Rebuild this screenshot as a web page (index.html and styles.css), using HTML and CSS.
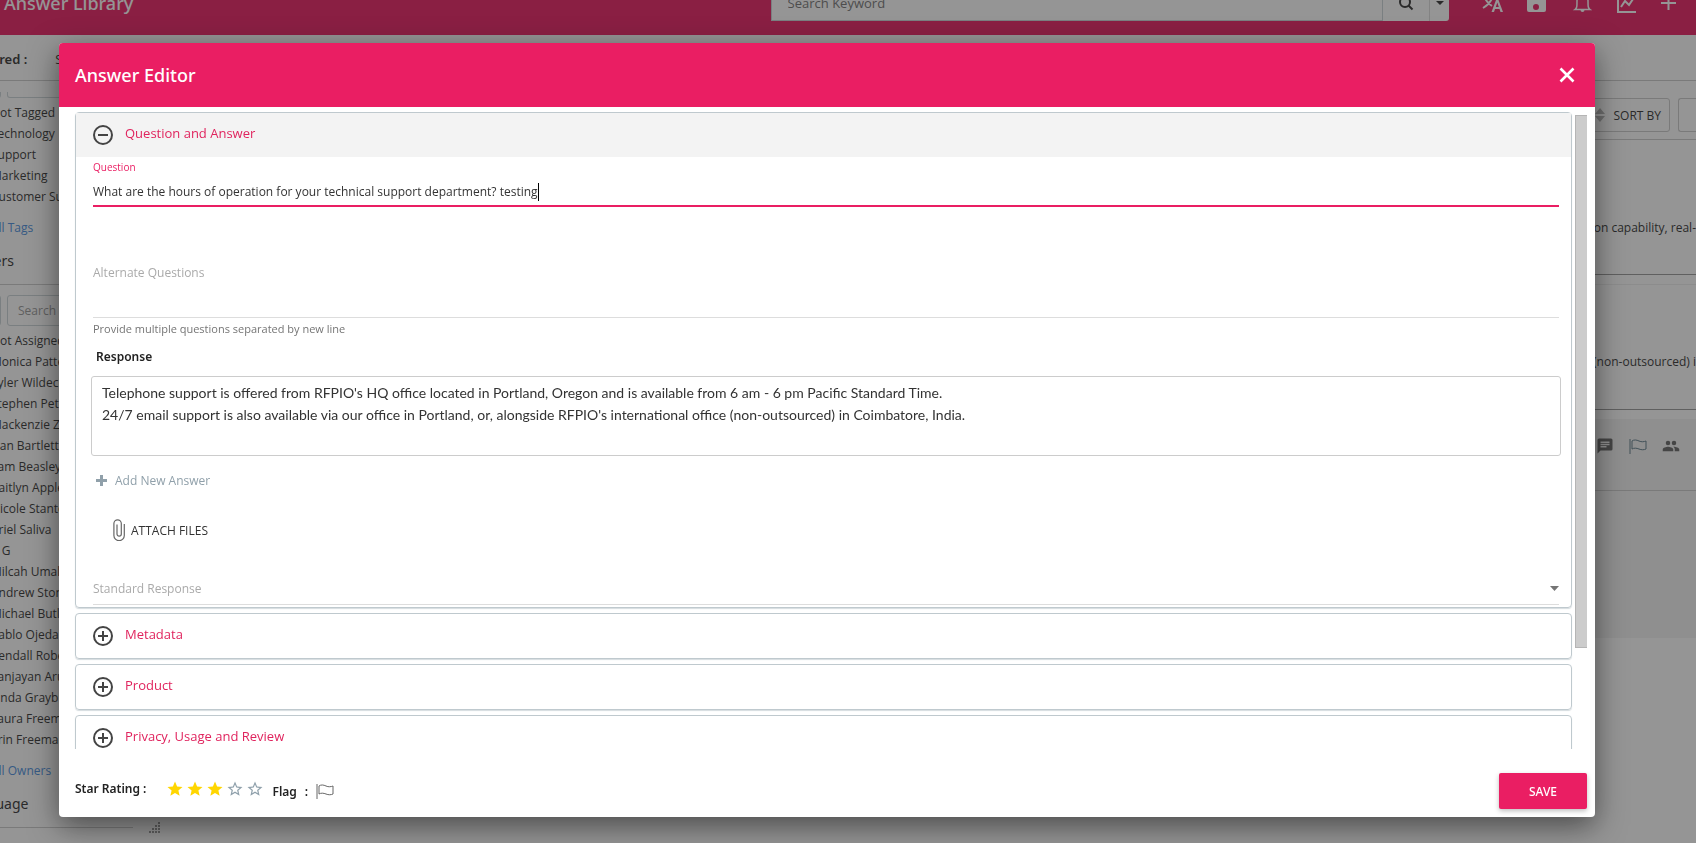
FILE: index.html
```
<!DOCTYPE html>
<html lang="en">
<head>
  <meta charset="UTF-8">
  <meta name="viewport" content="width=device-width, initial-scale=1.0">
  <title>Answer Library</title>
  <link rel="stylesheet" href="styles.css">
</head>
<body>
  <!-- Shared icons -->
  <svg class="icon-defs" aria-hidden="true">
    <symbol id="icon-plus-circle" viewBox="0 0 20 20">
      <circle cx="10" cy="10" r="9" fill="none" stroke="currentColor" stroke-width="2"/>
      <path d="M5 10h10M10 5v10" stroke="currentColor" stroke-width="2"/>
    </symbol>
    <symbol id="icon-minus-circle" viewBox="0 0 20 20">
      <circle cx="10" cy="10" r="9" fill="none" stroke="currentColor" stroke-width="2"/>
      <path d="M5 10h10" stroke="currentColor" stroke-width="2"/>
    </symbol>
    <symbol id="icon-star" viewBox="0 0 24 24">
      <path d="M12 17.27L18.18 21l-1.64-7.03L22 9.24l-7.19-.61L12 2 9.19 8.63 2 9.24l5.46 4.73L5.82 21z" fill="currentColor"/>
    </symbol>
    <symbol id="icon-star-empty" viewBox="0 0 24 24">
      <path d="M22 9.24l-7.19-.62L12 2 9.19 8.63 2 9.24l5.46 4.73L5.82 21 12 17.27 18.18 21l-1.63-7.03L22 9.24zM12 15.4l-3.76 2.27 1-4.28-3.32-2.88 4.38-.38L12 6.1l1.71 4.04 4.38.38-3.32 2.88 1 4.28L12 15.4z" fill="currentColor"/>
    </symbol>
    <symbol id="icon-flag" viewBox="0 0 18 16">
      <path d="M1 1v15M3 3c2-1.500 4.500-1.200 7 0s5 .8 7 0v8c-2 1-4.500 1-7 0s-5-1.200-7 0z" fill="none" stroke="currentColor" stroke-width="1"/>
    </symbol>
  </svg>

  <!-- Page behind the dialog -->
  <div class="page">
    <header class="topbar">
      <h1 class="topbar-title">Answer Library</h1>
      <form class="search">
        <input type="text" class="search-input" placeholder="Search Keyword" aria-label="Search Keyword">
        <button type="button" class="search-button" aria-label="Search">
          <svg width="16" height="16" viewBox="0 0 16 16"><circle cx="7" cy="7" r="5" fill="none" stroke="currentColor" stroke-width="2"/><path d="M10.500 10.500l4 4" stroke="currentColor" stroke-width="2"/></svg>
        </button>
        <button type="button" class="search-caret" aria-label="Search options">
          <svg width="8" height="4" viewBox="0 0 8 4"><path d="M0 0h8L4 4z" fill="currentColor"/></svg>
        </button>
      </form>
      <nav class="topbar-icons">
        <button type="button" aria-label="Translate">
          <svg viewBox="0 0 24 24"><path d="M2 4h14M9 1v3M13 4c-1 5-5 10-10 13M5 7c1.500 4 4 6 7 8" fill="none" stroke="currentColor" stroke-width="2"/><path d="M18.500 9h-2.500L11.500 21h2.500l1-3h4.500l1 3H23zm-2.700 7l1.500-4.500L18.800 16z" fill="currentColor"/></svg>
        </button>
        <button type="button" aria-label="Saved">
          <svg viewBox="0 0 24 24"><path d="M18 3H5a2 2 0 0 0-2 2v14a2 2 0 0 0 2 2h15a2 2 0 0 0 2-2V7zm-6 16a3 3 0 1 1 0-6 3 3 0 0 1 0 6zM15 9H5V5h10z" fill="currentColor"/></svg>
        </button>
        <button type="button" aria-label="Notifications">
          <svg viewBox="0 0 24 24"><path d="M7 18.500c2-1.500 2-3 2-8.500 0-3 2-6 5.500-6S20 7 20 10c0 5.500 0 7 2 8.500z" fill="none" stroke="currentColor" stroke-width="1.500"/><path d="M12.500 19h4a2 2 0 0 1-4 0z" fill="currentColor"/></svg>
        </button>
        <button type="button" aria-label="Reports">
          <svg viewBox="0 0 24 24"><path d="M6 2v19h18M9 16l4-6 4 4 6-9" fill="none" stroke="currentColor" stroke-width="2"/></svg>
        </button>
        <button type="button" aria-label="Add">
          <svg viewBox="0 0 24 24"><path d="M5 12h15M12.500 5v14" stroke="currentColor" stroke-width="2"/></svg>
        </button>
      </nav>
    </header>

    <div class="filter-bar">
      <b>Filtered :</b>
      <span>Search</span>
    </div>

    <div class="columns">
      <aside class="sidebar">
        <div class="filter-box filter-box-cut">
          <span class="filter-check"></span>
          <input type="text" class="filter-input" aria-label="Search Tags">
        </div>
        <ul class="filter-list">
          <li>Not Tagged</li>
          <li>Technology</li>
          <li>Support</li>
          <li>Marketing</li>
          <li>Customer Success</li>
        </ul>
        <a class="filter-all" href="#">All Tags</a>
        <h2 class="filter-heading">Owners</h2>
        <div class="filter-box">
          <span class="filter-check"></span>
          <input type="text" class="filter-input" placeholder="Search Owners" aria-label="Search Owners">
        </div>
        <ul class="filter-list">
          <li>Not Assigned</li>
          <li>Monica Patterson</li>
          <li>Tyler Wildeck</li>
          <li>Stephen Peters</li>
          <li>Mackenzie Zane</li>
          <li>Dan Bartlett</li>
          <li>Sam Beasley</li>
          <li>Caitlyn Appleby</li>
          <li>Nicole Stanton</li>
          <li>Ariel Saliva</li>
          <li>A G</li>
          <li>Milcah Umali</li>
          <li>Andrew Stone</li>
          <li>Michael Butler</li>
          <li>Pablo Ojeda</li>
          <li>Kendall Roberts</li>
          <li>Sanjayan Arun</li>
          <li>Linda Grayburn</li>
          <li>Laura Freeman</li>
          <li>Erin Freeman</li>
        </ul>
        <a class="filter-all" href="#">All Owners</a>
        <h2 class="filter-heading filter-heading-last">Language</h2>
      </aside>
      <svg class="resize-handle" width="12" height="12" viewBox="0 0 12 12" aria-hidden="true"><path d="M0 9h2v2H0zM3 9h2v2H3zM6 9h2v2H6zM9 9h2v2H9zM3 6h2v2H3zM6 6h2v2H6zM9 6h2v2H9zM6 3h2v2H6zM9 3h2v2H9zM9 0h2v2H9z" fill="currentColor"/></svg>

      <main class="results">
        <div class="toolbar">
          <button type="button" class="tool-button">
            <svg width="10" height="14" viewBox="0 0 10 14"><path d="M0 6l5-6 5 6zM0 8h10l-5 6z" fill="#b5b5b5"/></svg>
            SORT BY
          </button>
          <button type="button" class="tool-button tool-button-cut" aria-label="More"></button>
        </div>
        <article class="result result-first">
          <p>integration capability, real-</p>
        </article>
        <article class="result">
          <p>(non-outsourced) i</p>
        </article>
        <article class="result result-active">
          <div class="result-icons">
            <svg width="18" height="18" viewBox="0 0 24 24"><path d="M20 2H4a2 2 0 0 0-2 2v18l4-4h14a2 2 0 0 0 2-2V4a2 2 0 0 0-2-2zm-6 12H6v-2h8zm4-3H6V9h12zm0-3H6V6h12z" fill="#666"/></svg>
            <svg class="flag" width="18" height="16"><use href="#icon-flag"/></svg>
            <svg width="18" height="18" viewBox="0 0 24 24"><path d="M16 11a3 3 0 1 0 0-6 3 3 0 0 0 0 6zm-8 0a3 3 0 1 0 0-6 3 3 0 0 0 0 6zm0 2c-2.300 0-7 1.200-7 3.500V19h14v-2.500C15 14.200 10.300 13 8 13zm8 0h-1c1.200.8 2 2 2 3.500V19h6v-2.500c0-2.300-4.700-3.500-7-3.500z" fill="#666"/></svg>
          </div>
        </article>
      </main>
    </div>
  </div>

  <!-- Answer Editor -->
  <div class="overlay">
    <div class="dialog" role="dialog" aria-labelledby="dialogTitle">
      <div class="dialog-header">
        <h2 id="dialogTitle">Answer Editor</h2>
        <button type="button" class="close-button" aria-label="Close">
          <svg width="16" height="16" viewBox="0 0 16 16"><path d="M1.500 1.500l13 13M14.500 1.500l-13 13" stroke="currentColor" stroke-width="2.600"/></svg>
        </button>
      </div>

      <div class="dialog-body">
        <div class="panels">
          <section class="panel">
            <button type="button" class="panel-header panel-header-open">
              <svg width="20" height="20"><use href="#icon-minus-circle"/></svg>
              <span>Question and Answer</span>
            </button>
            <div class="panel-content">
              <label class="question-label" for="question">Question</label>
              <div class="question-field">
                <input type="text" id="question" value="What are the hours of operation for your technical support department? testing">
                <span class="text-cursor"></span>
              </div>

              <textarea id="alternate" class="alternate" placeholder="Alternate Questions" aria-label="Alternate Questions" aria-describedby="alternateHint"></textarea>
              <p id="alternateHint" class="hint">Provide multiple questions separated by new line</p>

              <label class="response-label" for="response">Response</label>
              <textarea id="response" class="response">Telephone support is offered from RFPIO's HQ office located in Portland, Oregon and is available from 6 am - 6 pm Pacific Standard Time.
24/7 email support is also available via our office in Portland, or, alongside RFPIO's international office (non-outsourced) in Coimbatore, India.</textarea>

              <button type="button" class="add-answer">
                <svg width="11" height="11" viewBox="0 0 11 11"><path d="M0 5.500h11M5.500 0v11" stroke="currentColor" stroke-width="3"/></svg>
                Add New Answer
              </button>
              <button type="button" class="attach">
                <svg width="12" height="22" viewBox="0 0 12 22"><path d="M11.300 5v11.500a5 5 0 0 1-10.400 0V4.500a3.700 3.700 0 0 1 7.400 0V15a2 2 0 0 1-4.300 0V5.500" fill="none" stroke="#666" stroke-width="1.200"/></svg>
                ATTACH FILES
              </button>

              <div class="standard">
                <select id="standard" aria-label="Standard Response">
                  <option>Standard Response</option>
                </select>
                <svg width="9" height="5" viewBox="0 0 9 5"><path d="M0 0h9L4.500 5z" fill="#757575"/></svg>
              </div>
            </div>
          </section>

          <section class="panel">
            <button type="button" class="panel-header">
              <svg width="20" height="20"><use href="#icon-plus-circle"/></svg>
              <span>Metadata</span>
            </button>
          </section>
          <section class="panel">
            <button type="button" class="panel-header">
              <svg width="20" height="20"><use href="#icon-plus-circle"/></svg>
              <span>Product</span>
            </button>
          </section>
          <section class="panel">
            <button type="button" class="panel-header">
              <svg width="20" height="20"><use href="#icon-plus-circle"/></svg>
              <span>Privacy, Usage and Review</span>
            </button>
          </section>
        </div>
        <div class="scrollbar"><div class="scrollbar-thumb"></div></div>
      </div>

      <div class="dialog-footer">
        <b class="rating-label">Star Rating :</b>
        <div class="stars">
          <button type="button" class="star star-on" aria-label="1 star"><svg><use href="#icon-star"/></svg></button>
          <button type="button" class="star star-on" aria-label="2 stars"><svg><use href="#icon-star"/></svg></button>
          <button type="button" class="star star-on" aria-label="3 stars"><svg><use href="#icon-star"/></svg></button>
          <button type="button" class="star" aria-label="4 stars"><svg><use href="#icon-star-empty"/></svg></button>
          <button type="button" class="star" aria-label="5 stars"><svg><use href="#icon-star-empty"/></svg></button>
        </div>
        <div class="flag-field">
          <b>Flag</b>
          <b>:</b>
          <button type="button" class="flag-button" aria-label="Flag"><svg width="18" height="16"><use href="#icon-flag"/></svg></button>
        </div>
        <button type="button" class="save-button">SAVE</button>
      </div>
    </div>
  </div>
</body>
</html>
```
FILE: styles.css
```
* {
  box-sizing: border-box;
}
body {
  margin: 0;
  font-family: "Open Sans", "Noto Sans", sans-serif;
  font-size: 12px;
  line-height: 21px;
  color: #333;
  overflow: hidden;
}
h1, h2, p, ul {
  margin: 0;
  padding: 0;
  list-style: none;
  font-weight: 400;
}
h1, h2, b {
  font-family: "Noto Sans", sans-serif;
}
button, input, select, textarea {
  font: inherit;
  color: inherit;
  background: none;
  border: 0;
  padding: 0;
  margin: 0;
  outline: 0;
}
button {
  cursor: pointer;
}
svg {
  display: block;
  flex: none;
}
.icon-defs {
  position: absolute;
  width: 0;
  height: 0;
}

/* Page */
.page {
  height: 100vh;
  overflow: hidden;
}
.topbar {
  display: flex;
  align-items: flex-end;
  height: 35px;
  padding: 0 16px 14px 4px;
  background: #ea1e63;
  color: #fff;
}
.topbar-title {
  flex: 1;
  font-size: 18px;
  font-weight: 500;
  line-height: 36px;
}
.search {
  display: flex;
  flex: 0 0 40vw;
  height: 36px;
  background: #fff;
  color: #333;
  border-radius: 3px;
}
.search-input {
  flex: 1;
  padding: 0 16px;
  font-size: 13px;
  border: 1px solid #ccd5d8;
}
.search-button, .search-caret {
  display: flex;
  align-items: center;
  justify-content: center;
  width: 46px;
}
.search-caret {
  width: 20px;
  border-left: 1px solid #ddd;
}
.topbar-icons {
  display: flex;
  align-items: center;
  gap: 20px;
  height: 36px;
  padding-left: 31px;
}
.topbar-icons svg {
  width: 24px;
  height: 24px;
}
.filter-bar {
  display: flex;
  gap: 28px;
  height: 46px;
  margin-left: -28px;
  padding-top: 14px;
  font-size: 13px;
  border-bottom: 1px solid #ccc;
}
.filter-bar b {
  font-weight: 600;
}
.columns {
  display: flex;
}

/* Sidebar */
.sidebar {
  flex: none;
  width: 173px;
  margin-left: -40px;
}
.filter-box {
  display: flex;
  gap: 6px;
  height: 31px;
  margin: 10px 0 4px;
}
.filter-box-cut {
  height: 6px;
  margin: 11px 0 4px;
}
.filter-check {
  width: 41px;
  border: 1px solid #ccd5d8;
  border-radius: 3px;
}
.filter-input {
  flex: 1;
  min-width: 0;
  padding: 0 10px;
  border: 1px solid #ccd5d8;
  border-radius: 3px;
}
.filter-input::placeholder {
  color: #999;
}
.filter-box-cut .filter-check, .filter-box-cut .filter-input {
  border-top: 0;
  border-radius: 0 0 3px 3px;
}
.filter-list {
  padding-left: 31px;
  white-space: nowrap;
}
.filter-all {
  display: block;
  padding: 10px 0 0 31px;
  color: #4a8fe0;
  text-decoration: none;
}
.filter-heading {
  padding: 12px 0;
  font-size: 14px;
  line-height: 22px;
  padding-left: 3px;
  border-bottom: 1px solid #ccc;
}
.resize-handle {
  align-self: flex-end;
  margin: 0 0 -6px 16px;
  color: #999;
}

/* Results */
.results {
  flex: 1;
  text-align: right;
}
.toolbar {
  display: flex;
  justify-content: flex-end;
  gap: 8px;
  padding: 17px 0 7px;
  border-bottom: 1px solid #ccc;
}
.tool-button {
  display: flex;
  align-items: center;
  gap: 8px;
  height: 34px;
  padding: 0 8px 0 12px;
  border: 1px solid #ccc;
  border-radius: 3px;
}
.tool-button-cut {
  width: 18px;
  padding: 0;
  border-right: 0;
  border-radius: 3px 0 0 3px;
}
.result {
  height: 126px;
  margin-bottom: 9px;
  padding-top: 66px;
  border-top: 1px solid #eee;
  border-bottom: 1px solid #999;
}
.result-first {
  height: 135px;
  padding-top: 77px;
  border-top: 0;
}
.result-active {
  height: 219px;
  padding-top: 0;
  background: #f3f3f3;
  border: 0;
}
.result-icons {
  display: flex;
  align-items: center;
  justify-content: flex-end;
  gap: 15px;
  height: 72px;
  padding: 0 16px 18px 0;
  border-bottom: 1px solid #ccc;
}
.flag {
  color: #607d8b;
}

/* Dialog */
.overlay {
  position: fixed;
  inset: 0;
  display: flex;
  padding: 43px 101px 26px 59px;
  background: rgba(33, 33, 33, 0.48);
}
.dialog {
  display: flex;
  flex: 1;
  flex-direction: column;
  min-width: 0;
  background: #fff;
  border-radius: 4px;
  box-shadow: 0 9px 30px rgba(0, 0, 0, 0.5);
  overflow: hidden;
}
.dialog-header {
  display: flex;
  align-items: center;
  justify-content: space-between;
  height: 64px;
  padding: 0 20px 0 16px;
  background: #ea1e63;
  color: #fff;
}
.dialog-header h2 {
  font-size: 18px;
  font-weight: 500;
}
.dialog-body {
  display: flex;
  flex: 1;
  gap: 3px;
  min-height: 0;
  padding: 0 8px 0 16px;
  overflow: hidden;
}
.panels {
  display: flex;
  flex: 1;
  flex-direction: column;
  gap: 5px;
  padding-top: 5px;
}
.panel {
  flex: none;
  border: 1px solid #bfc9ce;
  border-radius: 4px;
  box-shadow: 0 1px 1px #d5dcdf;
}
.panel-header {
  display: flex;
  align-items: center;
  gap: 12px;
  width: 100%;
  height: 44px;
  padding-left: 17px;
  color: #444;
}
.panel-header span {
  padding-bottom: 3px;
  font-size: 13px;
  color: #e0245e;
}
.panel-header-open {
  background: #f3f3f3;
}
.panel-content {
  display: flex;
  flex-direction: column;
  padding: 0 12px 2px 17px;
}
.question-label {
  font-size: 10px;
  color: #ea1e63;
}
.question-field {
  display: flex;
  align-items: center;
  height: 29px;
  border-bottom: 2px solid #ea1e63;
}
.question-field input {
  field-sizing: content;
}
.text-cursor {
  width: 1px;
  height: 18px;
  background: #000;
}
.alternate {
  height: 56px;
  margin-top: 55px;
  border-bottom: 1px solid #ddd;
  resize: none;
}
.alternate::placeholder {
  color: #aaa;
}
.hint {
  font-size: 11px;
  color: #757575;
}
.response-label {
  padding: 7px 0 9px 3px;
  font-family: "Noto Sans", sans-serif;
  font-weight: 600;
  color: #222;
}
.response {
  height: 80px;
  margin: 0 -2px;
  padding: 5px 10px;
  font-family: Lato, sans-serif;
  font-size: 14px;
  line-height: 22px;
  border: 1px solid #ccc;
  border-radius: 3px;
  resize: none;
}
.add-answer, .attach {
  display: flex;
  align-items: center;
  align-self: flex-start;
  gap: 8px;
}
.add-answer {
  margin-top: 14px;
  padding-left: 3px;
  color: #90a0aa;
}
.attach {
  gap: 6px;
  margin-top: 28px;
  padding-left: 20px;
}
.standard {
  display: flex;
  align-items: center;
  margin-top: 32px;
  height: 32px;
  border-bottom: 1px solid #ddd;
}
.standard select {
  flex: 1;
  color: #aaa;
  appearance: none;
}

/* Scrollbar */
.scrollbar {
  width: 12px;
  padding-top: 8px;
}
.scrollbar-thumb {
  height: 84%;
  background: #ccc;
  border: 1px solid #b5b5b5;
  border-right: 0;
}

/* Footer */
.dialog-footer {
  display: flex;
  align-items: center;
  height: 68px;
  padding: 16px 8px 0 16px;
  color: #222;
}
.dialog-footer b {
  font-weight: 600;
}
.rating-label {
  padding-bottom: 6px;
}
.stars {
  display: flex;
  gap: 2px;
  padding: 0 0 4px 20px;
}
.star {
  color: #8fa0ab;
}
.star svg {
  width: 18px;
  height: 18px;
}
.star-on {
  color: #ffd600;
}
.flag-field {
  display: flex;
  align-items: center;
  gap: 8px;
  padding-left: 8px;
}
.flag-button {
  color: #666;
}
.save-button {
  width: 88px;
  height: 36px;
  margin-left: auto;
  font-family: "Noto Sans", sans-serif;
  font-weight: 500;
  color: #fff;
  background: #ea1e63;
  border-radius: 2px;
  box-shadow: 0 2px 5px rgba(0, 0, 0, 0.26);
}
```
